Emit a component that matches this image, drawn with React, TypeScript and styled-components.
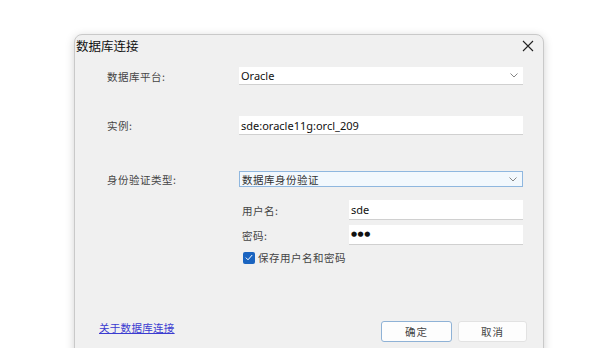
import React from "react";
import styled, { createGlobalStyle } from "styled-components";

const Global = createGlobalStyle`
  html, body { margin: 0; padding: 0; background: #ffffff; overflow: hidden; }
  body { width: 600px; height: 348px; font-family: "Noto Sans", "Noto Sans CJK SC", sans-serif; }
`;

const Page = styled.div`
  width: 600px;
  height: 348px;
  padding: 34px 0 0 74px;
  box-sizing: border-box;
  overflow: hidden;
`;

const Dialog = styled.div`
  width: 470px;
  height: 340px;
  box-sizing: border-box;
  background: #f0f0f0;
  border: 1px solid #c9c9c9;
  border-radius: 8px 8px 0 0;
  box-shadow: 0 2px 10px rgba(0, 0, 0, 0.18);
  display: flex;
  flex-direction: column;
`;

const TitleBar = styled.div`
  height: 22px;
  display: flex;
  align-items: center;
  justify-content: space-between;
  padding: 0 8px 0 1px;
`;

const Title = styled.span`
  font-family: "Noto Sans CJK SC", sans-serif;
  font-size: 12.5px;
  color: #111;
  margin-top: -2px;
`;

const CloseBtn = styled.div`
  width: 14px;
  height: 14px;
  display: flex;
  align-items: center;
  justify-content: center;
  margin-top: -1px;
`;

const Content = styled.div`
  padding: 10px 20px 0 32px;
  display: flex;
  flex-direction: column;
`;

const Row = styled.div<{ $mt?: number }>`
  display: grid;
  grid-template-columns: 132px 1fr;
  align-items: center;
  margin-top: ${(p) => p.$mt ?? 0}px;
`;

const Label = styled.span`
  font-family: "Noto Sans CJK SC", sans-serif;
  font-size: 10.5px;
  color: #444;
  letter-spacing: 0.5px;
`;

const FieldBase = styled.div`
  height: 18px;
  box-sizing: border-box;
  display: flex;
  align-items: center;
  justify-content: space-between;
  padding: 0 5px 0 2px;
  font-size: 11px;
  color: #111;
  background: #fff;
  border-bottom: 1px solid #d0d0d0;
`;

const Select = styled(FieldBase)<{ $focused?: boolean }>`
  background: ${(p) => (p.$focused ? "#f2f8fd" : "#fff")};
  border: ${(p) => (p.$focused ? "1px solid #8fb7df" : "none")};
  border-bottom: 1px solid ${(p) => (p.$focused ? "#8fb7df" : "#d0d0d0")};
  height: ${(p) => (p.$focused ? 16 : 18)}px;
`;

const Input = styled(FieldBase)<{ $h?: number }>`
  height: ${(p) => p.$h ?? 19}px;
`;

const CjkValue = styled.span`
  font-family: "Noto Sans CJK SC", sans-serif;
  font-size: 10.5px;
  color: #333;
  letter-spacing: 0.5px;
`;

const Dots = styled.span`
  font-family: "DejaVu Sans", sans-serif;
  font-size: 7px;
  letter-spacing: 0.5px;
  line-height: 1;
  color: #111;
`;

const SubForm = styled.div`
  margin-left: 135px;
  margin-top: 13px;
  display: flex;
  flex-direction: column;
`;

const SubRow = styled.div<{ $mt?: number }>`
  display: grid;
  grid-template-columns: 107px 1fr;
  align-items: center;
  margin-top: ${(p) => p.$mt ?? 0}px;
`;

const CheckRow = styled.label`
  display: flex;
  align-items: center;
  gap: 3px;
  margin-top: 5px;
  margin-left: 1px;
`;

const CheckBox = styled.span`
  width: 12px;
  height: 12px;
  border-radius: 2px;
  background: #1a64c0;
  display: flex;
  align-items: center;
  justify-content: center;
`;

const Footer = styled.div`
  margin-top: auto;
  height: 65px;
  display: flex;
  align-items: flex-start;
  justify-content: space-between;
  padding: 0 16px 0 24px;
`;

const Link = styled.a`
  font-family: "Noto Sans CJK SC", sans-serif;
  font-size: 10.5px;
  color: #3b3bd0;
  text-decoration: underline;
  margin-top: 12px;
  letter-spacing: 0.3px;
`;

const Buttons = styled.div`
  display: flex;
  gap: 6px;
  margin-top: 13px;
`;

const Button = styled.button<{ $primary?: boolean; $w: number }>`
  width: ${(p) => p.$w}px;
  height: 21px;
  box-sizing: border-box;
  background: #fdfdfd;
  border: 1px solid ${(p) => (p.$primary ? "#8fb2d6" : "#e2e2e2")};
  border-radius: 3px;
  font-family: "Noto Sans CJK SC", sans-serif;
  font-size: 10.5px;
  color: #444;
  padding: 0;
  letter-spacing: 1px;
`;

const Chevron = () => (
  <svg width="8" height="5" viewBox="0 0 8 5">
    <path d="M0.5 0.5 L4 4 L7.5 0.5" fill="none" stroke="#777" strokeWidth="0.9" />
  </svg>
);

export default function App() {
  return (
    <>
      <Global />
      <Page>
        <Dialog>
          <TitleBar>
            <Title>数据库连接</Title>
            <CloseBtn>
              <svg width="12" height="12" viewBox="0 0 12 12">
                <path d="M1 1 L11 11 M11 1 L1 11" stroke="#222" strokeWidth="1.1" />
              </svg>
            </CloseBtn>
          </TitleBar>
          <Content>
            <Row>
              <Label>数据库平台:</Label>
              <Select>
                <span>Oracle</span>
                <Chevron />
              </Select>
            </Row>
            <Row $mt={31}>
              <Label>实例:</Label>
              <Input>
                <span>sde:oracle11g:orcl_209</span>
              </Input>
            </Row>
            <Row $mt={36}>
              <Label>身份验证类型:</Label>
              <Select $focused>
                <CjkValue>数据库身份验证</CjkValue>
                <Chevron />
              </Select>
            </Row>
            <SubForm>
              <SubRow>
                <Label>用户名:</Label>
                <Input $h={20}>
                  <span>sde</span>
                </Input>
              </SubRow>
              <SubRow $mt={5}>
                <Label>密码:</Label>
                <Input $h={20}>
                  <Dots>●●●</Dots>
                </Input>
              </SubRow>
              <CheckRow>
                <CheckBox>
                  <svg width="8" height="7" viewBox="0 0 8 7">
                    <path d="M0.8 3.6 L3 5.8 L7.2 1" fill="none" stroke="#fff" strokeWidth="1" />
                  </svg>
                </CheckBox>
                <Label>保存用户名和密码</Label>
              </CheckRow>
            </SubForm>
          </Content>
          <Footer>
            <Link>关于数据库连接</Link>
            <Buttons>
              <Button $primary $w={71}>确定</Button>
              <Button $w={69}>取消</Button>
            </Buttons>
          </Footer>
        </Dialog>
      </Page>
    </>
  );
}
